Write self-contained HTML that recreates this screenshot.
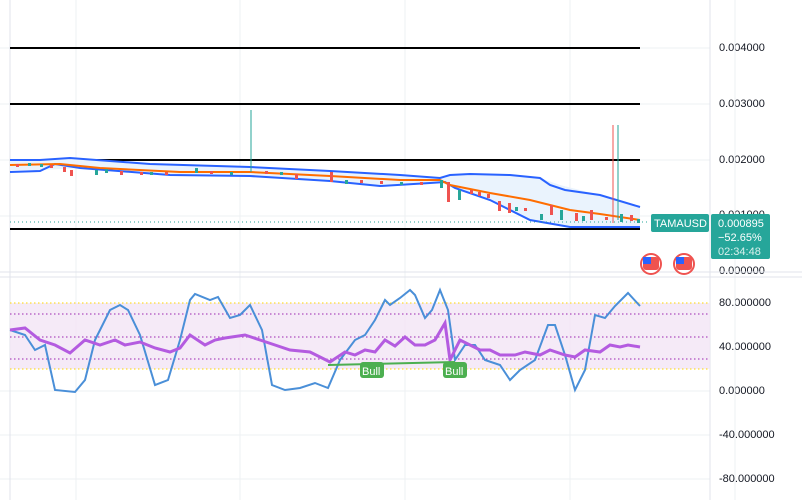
<!DOCTYPE html><html><head><style>
body{margin:0;width:802px;height:500px;background:#fff;overflow:hidden;font-family:"Liberation Sans",sans-serif}
.ax{position:absolute;left:719px;font-size:11px;color:#131722}
</style></head><body>
<div class="ax" style="top:42px">0.004000</div><div class="ax" style="top:98px">0.003000</div><div class="ax" style="top:154px">0.002000</div><div class="ax" style="top:209px">0.001000</div><div class="ax" style="top:265px">0.000000</div>
<div class="ax" style="top:297px">80.000000</div><div class="ax" style="top:341px">40.000000</div><div class="ax" style="top:385px">0.000000</div><div class="ax" style="top:429px">-40.000000</div><div class="ax" style="top:473px">-80.000000</div>
<svg width="802" height="500" style="position:absolute;left:0;top:0">
<g stroke="#eef0f3" stroke-width="1">
<line x1="76" y1="0" x2="76" y2="500"/><line x1="240" y1="0" x2="240" y2="500"/><line x1="405" y1="0" x2="405" y2="500"/><line x1="570" y1="0" x2="570" y2="500"/><line x1="735" y1="0" x2="735" y2="500"/>
<line x1="0" y1="48" x2="710" y2="48"/><line x1="0" y1="104" x2="710" y2="104"/><line x1="0" y1="160" x2="710" y2="160"/><line x1="0" y1="216" x2="710" y2="216"/>
<line x1="0" y1="391" x2="710" y2="391"/><line x1="0" y1="435" x2="710" y2="435"/><line x1="0" y1="479" x2="710" y2="479"/>
</g>
<line x1="10" y1="0" x2="10" y2="500" stroke="#e0e3eb"/>
<line x1="0" y1="272" x2="802" y2="272" stroke="#e0e3eb"/>
<line x1="0" y1="277" x2="802" y2="277" stroke="#e0e3eb"/>
<line x1="710" y1="0" x2="710" y2="500" stroke="#e0e3eb"/>
<g stroke="#000" stroke-width="2"><line x1="10" y1="48" x2="640" y2="48"/><line x1="10" y1="104" x2="640" y2="104"/><line x1="10" y1="160" x2="640" y2="160"/><line x1="10" y1="229" x2="640" y2="229"/></g>
<path d="M10,160 L40,160 L70,158 L150,164 L250,167 L330,171 L400,175 L445,178 L450,175 L500,174 L540,178 L560,185 L600,195 L640,207 L640,227 L600,227 L570,227 L530,220 L490,200 L455,188 L440,182 L380,186 L330,181 L250,176 L170,175 L80,168 L40,170 L10,170 Z" fill="#eaf3fd"/>
<polyline points="10,160 40,160 70,158 150,164 250,167 330,171 400,175 440,178 450,175 470,174 510,175 540,178 550,185 565,190 600,195 640,207" fill="none" stroke="#2962ff" stroke-width="2"/>
<polyline points="10,172 40,171 55,164 80,168 170,175 250,176 330,181 380,186 430,183 445,182 455,188 490,200 530,220 570,227 640,227" fill="none" stroke="#2962ff" stroke-width="2"/>
<polyline points="10,165 60,164 100,168 180,172 250,172 330,176 400,180 440,180 450,185 490,193 530,200 570,210 600,214 640,220" fill="none" stroke="#ff6d00" stroke-width="2"/>
<line x1="251" y1="110" x2="251" y2="172" stroke="#26a69a"/>
<line x1="613" y1="125" x2="613" y2="223" stroke="#ef5350"/>
<line x1="618" y1="125" x2="618" y2="220" stroke="#26a69a"/>
<g fill="#ef5350">
<rect x="16" y="164" width="3" height="3"/><rect x="50" y="165" width="3" height="3"/><rect x="63" y="167" width="3" height="5"/><rect x="70" y="170" width="3" height="6"/><rect x="120" y="171" width="3" height="4"/><rect x="140" y="172" width="3" height="3"/><rect x="165" y="172" width="3" height="3"/><rect x="210" y="171" width="3" height="3"/><rect x="265" y="171" width="3" height="3"/><rect x="295" y="174" width="3" height="5"/><rect x="330" y="172" width="3" height="10"/><rect x="360" y="180" width="3" height="3"/><rect x="380" y="181" width="3" height="3"/><rect x="420" y="182" width="3" height="3"/><rect x="447" y="182" width="3" height="20"/><rect x="470" y="190" width="3" height="4"/><rect x="478" y="192" width="3" height="4"/><rect x="487" y="194" width="3" height="4"/><rect x="498" y="201" width="3" height="10"/><rect x="508" y="203" width="3" height="10"/><rect x="524" y="208" width="3" height="3"/><rect x="550" y="205" width="3" height="10"/><rect x="575" y="213" width="3" height="8"/><rect x="590" y="210" width="3" height="10"/><rect x="605" y="217" width="3" height="3"/><rect x="630" y="215" width="3" height="6"/></g>
<g fill="#26a69a">
<rect x="28" y="163" width="3" height="3"/><rect x="40" y="164" width="3" height="3"/><rect x="95" y="170" width="3" height="5"/><rect x="105" y="169" width="3" height="4"/><rect x="150" y="172" width="3" height="3"/><rect x="195" y="168" width="3" height="5"/><rect x="230" y="172" width="3" height="3"/><rect x="280" y="172" width="3" height="3"/><rect x="345" y="180" width="3" height="4"/><rect x="400" y="182" width="3" height="3"/><rect x="440" y="180" width="3" height="8"/><rect x="458" y="190" width="3" height="10"/><rect x="515" y="207" width="3" height="4"/><rect x="540" y="214" width="3" height="6"/><rect x="560" y="210" width="3" height="10"/><rect x="582" y="216" width="3" height="5"/><rect x="620" y="214" width="3" height="8"/><rect x="637" y="219" width="3" height="4"/></g>
<line x1="10" y1="222" x2="650" y2="222" stroke="#26a69a" stroke-dasharray="1,3"/>
<rect x="10" y="303" width="700" height="66" fill="#f3e5f5" opacity="0.8"/>
<g stroke-dasharray="1.5,2.5" stroke-width="1"><line x1="10" y1="303" x2="710" y2="303" stroke="#ffd600"/><line x1="10" y1="369" x2="710" y2="369" stroke="#ffd600"/><line x1="10" y1="314" x2="710" y2="314" stroke="#9c27b0"/><line x1="10" y1="337" x2="710" y2="337" stroke="#9c27b0"/><line x1="10" y1="359" x2="710" y2="359" stroke="#9c27b0"/></g>
<polyline points="10,330 25,335 35,350 45,345 55,390 75,392 85,380 95,340 110,310 120,305 128,310 140,335 155,385 168,380 180,340 190,300 195,294 210,300 218,297 230,318 240,315 250,305 262,330 272,385 285,390 300,388 315,383 328,388 340,360 355,340 365,335 375,320 385,300 390,305 400,298 410,290 415,295 425,318 432,310 440,290 448,310 455,360 465,345 475,345 485,360 500,365 510,380 520,370 535,360 548,325 555,325 565,355 575,390 585,370 595,315 605,318 615,306 628,293 640,306" fill="none" stroke="#4a8fd8" stroke-width="2"/>
<polyline points="10,330 25,328 40,340 55,345 70,353 85,340 100,345 115,340 125,345 140,342 155,348 170,352 180,348 190,335 205,345 215,340 225,338 245,335 260,340 275,345 290,350 310,352 320,357 330,362 345,352 355,355 365,350 375,352 385,340 395,346 405,337 415,345 425,345 435,340 445,323 450,360 460,340 470,345 480,350 490,350 500,355 515,355 525,352 540,355 550,350 565,355 575,357 585,350 600,352 610,345 620,347 628,345 640,347" fill="none" stroke="#b45be0" stroke-width="3"/>
<line x1="328" y1="365" x2="455" y2="362" stroke="#4caf50" stroke-width="2"/>
<rect x="360" y="362" width="24" height="16" rx="3" fill="#4caf50"/><text x="362" y="375" font-size="11" fill="#fff">Bull</text>
<rect x="443" y="362" width="24" height="16" rx="3" fill="#4caf50"/><text x="445" y="375" font-size="11" fill="#fff">Bull</text>
<g><circle cx="651" cy="264" r="10" fill="#fff" stroke="#ef5350" stroke-width="2"/><rect x="643" y="257" width="16" height="13" rx="3" fill="#ef5350"/><rect x="643" y="257" width="8" height="7" fill="#2962ff"/>
<circle cx="684" cy="264" r="10" fill="#fff" stroke="#ef5350" stroke-width="2"/><rect x="676" y="257" width="16" height="13" rx="3" fill="#ef5350"/><rect x="676" y="257" width="8" height="7" fill="#2962ff"/></g>
<rect x="651" y="214" width="58" height="18" rx="2" fill="#26a69a"/><text x="654" y="227" font-size="11" fill="#fff">TAMAUSD</text>
<rect x="711" y="214" width="59" height="45" rx="2" fill="#26a69a"/>
<text x="718" y="227" font-size="11" fill="#fff">0.000895</text><text x="718" y="241" font-size="11" fill="#fff">−52.65%</text><text x="718" y="255" font-size="11" fill="#d8f0ec">02:34:48</text>
</svg>
</body></html>
